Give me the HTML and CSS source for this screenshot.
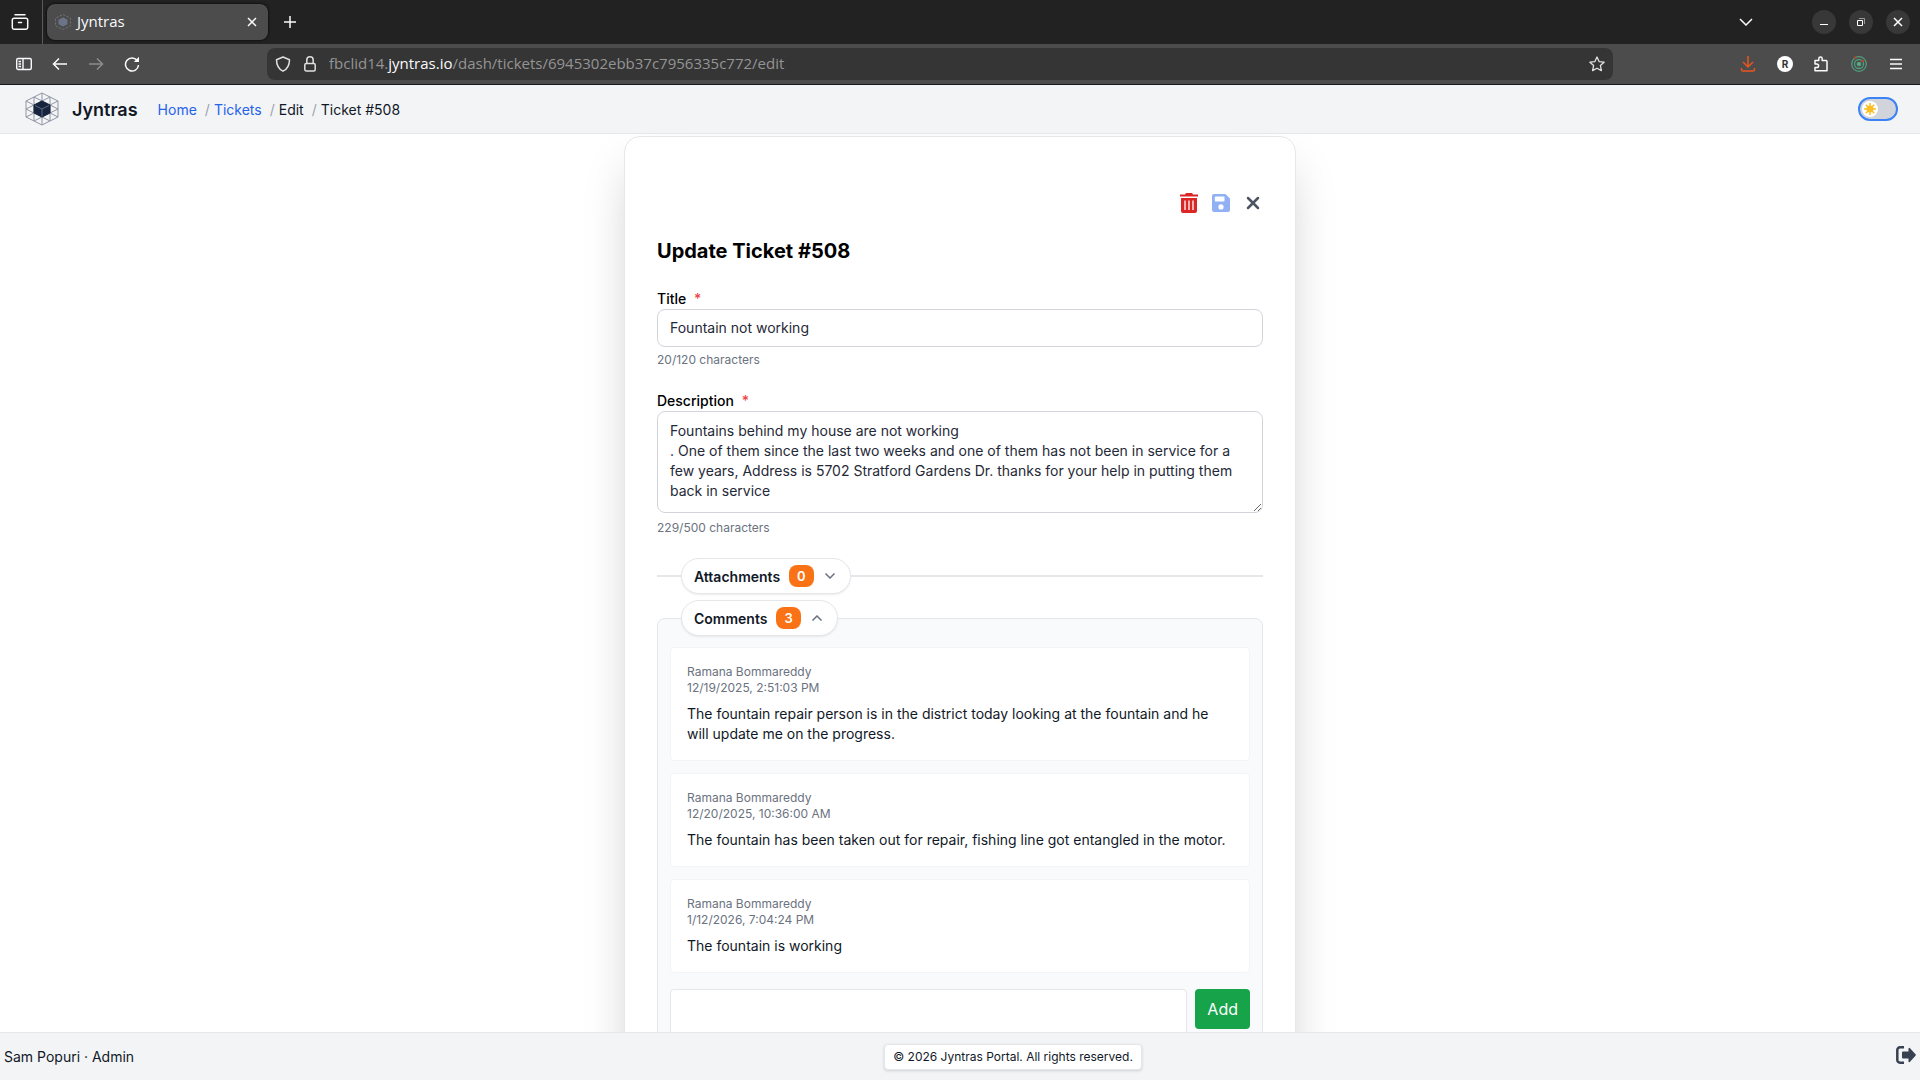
FILE: index.html
```html
<!DOCTYPE html>
<html lang="en">

<head>
    <meta charset="UTF-8">
    <meta name="viewport" content="width=device-width, initial-scale=1.0">
    <title>Jyntras</title>
    <link rel="stylesheet" href="styles.css">
</head>

<body>
    <!-- Browser tabs -->
    <div class="tab-bar">
        <button class="tab-overview" aria-label="Recent browsing">
            <svg width="18" height="18" viewBox="0 0 18 18" fill="none" stroke="#fbfbfe" stroke-width="1.5" stroke-linecap="round">
                <path d="M4 1.7h10M3 5.3h12a1.7 1.7 0 0 1 1.7 1.7v7.5a1.7 1.7 0 0 1-1.7 1.7H3a1.7 1.7 0 0 1-1.7-1.7V7A1.7 1.7 0 0 1 3 5.3zM7.5 9.5h3" />
            </svg>
        </button>
        <div class="tab">
            <svg width="16" height="16" viewBox="0 0 34 34" fill="none" stroke="#7d8290" stroke-width="1.5">
                <path d="M17 1l16 8v16l-16 8-16-8V9z" stroke-dasharray="5 3" />
                <path d="M17 9l8 4v8l-8 4-8-4v-8z" fill="#6b7488" stroke="#6b7488" stroke-width="3" />
            </svg>
            <span class="tab-title">Jyntras</span>
            <button class="tab-close" aria-label="Close tab">
                <svg width="10" height="10" viewBox="0 0 10 10" stroke="#fbfbfe" stroke-width="1.5">
                    <path d="M1 1l8 8M9 1l-8 8" />
                </svg>
            </button>
        </div>
        <button class="new-tab" aria-label="New tab">
            <svg width="12" height="12" viewBox="0 0 12 12" stroke="#fbfbfe" stroke-width="1.5">
                <path d="M6 0v12M0 6h12" />
            </svg>
        </button>
        <div class="window-buttons">
            <button class="list-tabs" aria-label="List all tabs">
                <svg width="14" height="8" viewBox="0 0 14 8" fill="none" stroke="#fbfbfe" stroke-width="1.5">
                    <path d="M1 1l6 6 6-6" />
                </svg>
            </button>
            <button class="window-button" aria-label="Minimize">
                <svg width="10" height="10" viewBox="0 0 10 10"><path d="M1 7h8v1H1z" fill="#fff" /></svg>
            </button>
            <button class="window-button" aria-label="Restore">
                <svg width="10" height="10" viewBox="0 0 10 10" fill="none">
                    <path d="M1.5 3.5h5v5h-5z" stroke="#fff" />
                    <path d="M3 1.5h5.5V7" stroke="#999" />
                </svg>
            </button>
            <button class="window-button" aria-label="Close">
                <svg width="10" height="10" viewBox="0 0 10 10" stroke="#fff" stroke-width="1.5"><path d="M1 1l8 8M9 1l-8 8" /></svg>
            </button>
        </div>
    </div>

    <!-- Address bar -->
    <div class="toolbar">
        <div class="toolbar-left">
            <button aria-label="Sidebar">
                <svg width="16" height="16" viewBox="0 0 16 16" fill="none" stroke="#fbfbfe" stroke-width="1.4">
                    <rect x=".7" y="2.5" width="14.6" height="11" rx="1.5" />
                    <path d="M7 2.5v11M2.5 5.5H5M2.5 8H5M2.5 10.5H5" />
                </svg>
            </button>
            <button aria-label="Back">
                <svg width="16" height="16" viewBox="0 0 16 16" fill="none" stroke="#fbfbfe" stroke-width="1.5">
                    <path d="M15 8H2M7 2.5L1.5 8 7 13.5" />
                </svg>
            </button>
            <button aria-label="Forward" disabled>
                <svg width="16" height="16" viewBox="0 0 16 16" fill="none" stroke="#8c8c8e" stroke-width="1.5">
                    <path d="M1 8h13M9 2.5L14.5 8 9 13.5" />
                </svg>
            </button>
            <button aria-label="Reload">
                <svg width="16" height="16" viewBox="0 0 16 16" fill="none" stroke="#fbfbfe" stroke-width="1.5">
                    <path d="M13.5 5A6.5 6.5 0 1 0 14.5 9" />
                    <path d="M15 .8V6H9.8z" fill="#fbfbfe" stroke="none" />
                </svg>
            </button>
        </div>
        <div class="url-bar">
            <svg width="16" height="16" viewBox="0 0 16 16" fill="none" stroke="#e0e0e2" stroke-width="1.5">
                <path d="M8 1l6.5 2.7c0 4.8-1.6 9-6.5 11.5C3.1 12.7 1.5 8.5 1.5 3.7z" stroke-linejoin="round" />
            </svg>
            <svg width="14" height="16" viewBox="1 0 14 16" fill="none" stroke="#e0e0e2" stroke-width="1.5">
                <rect x="2.8" y="7.5" width="10.4" height="7.5" rx="1.5" />
                <path d="M4.8 7.5V4a3.2 3.2 0 0 1 6.4 0v3.5" />
            </svg>
            <span class="url">fbclid14.<b>jyntras.io</b>/dash/tickets/6945302ebb37c7956335c772/edit</span>
            <button aria-label="Bookmark this page">
                <svg width="16" height="16" viewBox="0 0 16 16" fill="none" stroke="#e0e0e2" stroke-width="1.3" stroke-linejoin="round">
                    <path d="M8 1l2.1 4.6 5 .6-3.7 3.4 1 5L8 12.2l-4.4 2.4 1-5L.9 6.2l5-.6z" />
                </svg>
            </button>
        </div>
        <div class="toolbar-right">
            <button aria-label="Downloads">
                <svg width="16" height="16" viewBox="0 0 16 16" fill="none" stroke="#e95420" stroke-width="1.5">
                    <path d="M8 0v10.5M3 6l5 5 5-5M1.5 12v1.5A1.5 1.5 0 0 0 3 15h10a1.5 1.5 0 0 0 1.5-1.5V12" />
                </svg>
            </button>
            <button class="profile" aria-label="Profile">R</button>
            <button aria-label="Extensions">
                <svg width="16" height="16" viewBox="1 0 16 16" fill="none" stroke="#fbfbfe" stroke-width="1.5" stroke-linejoin="round">
                    <path d="M2 14.8V11.5h1.8a1.7 1.7 0 0 0 0-3.6H2V4.5h3.8V2.7a1.7 1.7 0 0 1 3.4 0v1.8H13a1 1 0 0 1 1 1v9.3z" />
                </svg>
            </button>
            <button aria-label="Tracker">
                <svg width="16" height="16" viewBox="0 0 16 16" fill="none" stroke="#4f9c7e" stroke-width="1.3">
                    <circle cx="8" cy="8" r="7.3" />
                    <circle cx="8" cy="8" r="4.5" />
                    <circle cx="8" cy="8" r="1.7" fill="#6bb08f" />
                    <path d="M3 1.5h2.5M10.5 5H13" stroke="#b5482a" stroke-width="2" />
                </svg>
            </button>
            <button aria-label="Application menu">
                <svg width="16" height="16" viewBox="0 0 16 16" stroke="#fbfbfe" stroke-width="1.3">
                    <path d="M2 3.5h12M2 8h12M2 12.5h12" />
                </svg>
            </button>
        </div>
    </div>

    <!-- Page header -->
    <header class="header">
        <svg class="logo" width="34" height="34" viewBox="0 0 34 34" fill="none" stroke="#8f95a3">
            <path d="M17 1l16 8v16l-16 8-16-8V9z" />
            <path d="M9 5v24M17 1v32M25 5v24M1 9l32 16M9 5l24 12M1 17l24 12M33 9L1 25M25 5L1 17M33 17L9 29" />
            <path d="M17 9l8 4v8l-8 4-8-4v-8z" fill="#16243d" stroke="#16243d" />
            <path d="M10 13.5l7 3.5 7-3.5M17 17v7.5" stroke="#5b6984" />
        </svg>
        <span class="brand">Jyntras</span>
        <nav class="breadcrumb" aria-label="Breadcrumb">
            <a href="#">Home</a>
            <span class="separator">/</span>
            <a href="#">Tickets</a>
            <span class="separator">/</span>
            <span>Edit</span>
            <span class="separator">/</span>
            <span>Ticket #508</span>
        </nav>
        <label class="theme-toggle">
            <input type="checkbox" aria-label="Dark mode">
            <span class="knob">
                <svg width="12" height="12" viewBox="0 0 12 12" stroke="#fbbf24" stroke-width="1.5">
                    <circle cx="6" cy="6" r="2.8" fill="#fbbf24" />
                    <path d="M6 0v12M0 6h12M1.8 1.8l8.4 8.4M10.2 1.8l-8.4 8.4" />
                </svg>
            </span>
        </label>
    </header>

    <!-- Ticket form -->
    <main class="content">
        <form class="card">
            <div class="actions">
                <button type="button" aria-label="Delete">
                    <svg width="18" height="20" viewBox="0 0 18 20">
                        <path d="M6 0h6l1 1.5h5v2H0v-2h5zM1 5h16v13a2 2 0 0 1-2 2H3a2 2 0 0 1-2-2z" fill="#dc2626" />
                        <path d="M5 7.5V17M9 7.5V17M13 7.5V17" stroke="#fff" stroke-width="1.3" />
                    </svg>
                </button>
                <button type="submit" aria-label="Save" disabled>
                    <svg width="18" height="18" viewBox="0 0 18 18">
                        <path fill="#92b1f5" fill-rule="evenodd" d="M2 0h11.5L18 4.5V16a2 2 0 0 1-2 2H2a2 2 0 0 1-2-2V2a2 2 0 0 1 2-2zM3.8 2.5a1 1 0 0 0-1 1v3a1 1 0 0 0 1 1h7.7a1 1 0 0 0 1-1v-3a1 1 0 0 0-1-1zM9 10.3a2.6 2.6 0 1 0 0 5.2 2.6 2.6 0 0 0 0-5.2z" />
                    </svg>
                </button>
                <button type="button" aria-label="Cancel">
                    <svg width="14" height="14" viewBox="0 0 14 14" stroke="#4b5563" stroke-width="2.5" stroke-linecap="round">
                        <path d="M2 2l10 10M12 2L2 12" />
                    </svg>
                </button>
            </div>
            <h1>Update Ticket #508</h1>
            <div class="form-group">
                <label for="title">Title <span class="required">*</span></label>
                <input type="text" id="title" name="title" value="Fountain not working" required>
                <p class="counter">20/120 characters</p>
            </div>
            <div class="form-group">
                <label for="description">Description <span class="required">*</span></label>
                <textarea id="description" name="description" rows="4" required>Fountains behind my house are not working
. One of them since the last two weeks and one of them has not been in service for a few years, Address is 5702 Stratford Gardens Dr. thanks for your help in putting them back in service</textarea>
                <p class="counter">229/500 characters</p>
            </div>

            <div class="section-toggle">
                <button type="button" class="pill" aria-expanded="false">
                    Attachments <span class="badge">0</span>
                    <svg width="14" height="6" viewBox="-2 0 14 6" fill="none" stroke="#6b7280" stroke-width="1.5">
                        <path d="M.5.5L5 5 9.5.5" />
                    </svg>
                </button>
            </div>

            <section class="comments">
                <button type="button" class="pill" aria-expanded="true">
                    Comments <span class="badge">3</span>
                    <svg width="14" height="6" viewBox="-2 0 14 6" fill="none" stroke="#6b7280" stroke-width="1.5">
                        <path d="M.5 5.5L5 1l4.5 4.5" />
                    </svg>
                </button>
                <div class="comment">
                    <p class="meta">Ramana Bommareddy<br>12/19/2025, 2:51:03 PM</p>
                    <p>The fountain repair person is in the district today looking at the fountain and he will update me on the progress.</p>
                </div>
                <div class="comment">
                    <p class="meta">Ramana Bommareddy<br>12/20/2025, 10:36:00 AM</p>
                    <p>The fountain has been taken out for repair, fishing line got entangled in the motor.</p>
                </div>
                <div class="comment">
                    <p class="meta">Ramana Bommareddy<br>1/12/2026, 7:04:24 PM</p>
                    <p>The fountain is working</p>
                </div>
                <div class="add-comment">
                    <textarea name="comment" aria-label="New comment"></textarea>
                    <button type="button" class="add-button">Add</button>
                </div>
            </section>
        </form>
    </main>

    <footer class="footer">
        <span class="user">Sam Popuri · Admin</span>
        <span class="copyright">© 2026 Jyntras Portal. All rights reserved.</span>
        <button class="sign-out" aria-label="Sign out">
            <svg width="20" height="18" viewBox="0 0 20 18">
                <path d="M8 1.3H4A2.7 2.7 0 0 0 1.3 4v10A2.7 2.7 0 0 0 4 16.7h4" fill="none" stroke="#374151" stroke-width="2.5" />
                <path d="M7 5.5h5.5V2.6a.8.8 0 0 1 1.3-.6l5.7 6.3a1 1 0 0 1 0 1.4L13.8 16a.8.8 0 0 1-1.3-.6v-2.9H7a1 1 0 0 1-1-1v-5a1 1 0 0 1 1-1z" fill="#374151" />
            </svg>
        </button>
    </footer>
</body>

</html>
```
FILE: styles.css
```css
/* styles.css */
* {
    box-sizing: border-box;
    margin: 0;
    padding: 0;
}

body {
    display: flex;
    flex-direction: column;
    height: 100vh;
    overflow: hidden;
    font-family: Inter, sans-serif;
    font-size: 14px;
    line-height: 20px;
    color: #111827;
    background-color: #fff;
}

button {
    display: flex;
    align-items: center;
    justify-content: center;
    border: none;
    background: none;
    font-family: inherit;
    cursor: pointer;
}

/* browser window */
.tab-bar {
    display: flex;
    flex: none;
    align-items: center;
    height: 44px;
    background-color: #222;
}

.tab-overview {
    width: 43px;
    height: 44px;
    padding-right: 3px;
    border-right: 1px solid #5a5a5a;
}

.tab {
    display: flex;
    align-items: center;
    gap: 6px;
    width: 221px;
    height: 36px;
    margin-left: 4px;
    padding: 0 8px;
    border-radius: 8px;
    background-color: #4c4c4c;
    box-shadow: 0 0 3px #000;
}

.tab-title {
    flex: 1;
    padding-bottom: 2px;
    font-family: "Open Sans", sans-serif;
    font-size: 15px;
    color: #fbfbfe;
}

.tab-close {
    width: 16px;
    height: 16px;
}

.new-tab {
    width: 44px;
    height: 44px;
}

.window-buttons {
    display: flex;
    align-items: center;
    gap: 13px;
    margin-left: auto;
    margin-right: 10px;
}

.list-tabs {
    margin-right: 46px;
}

.window-button {
    width: 24px;
    height: 24px;
    border-radius: 12px;
    background-color: #383838;
}

.toolbar {
    display: flex;
    flex: none;
    align-items: center;
    height: 41px;
    border-bottom: 1px solid #181818;
    background-color: #4c4c4c;
}

.toolbar-left {
    display: flex;
    gap: 20px;
    width: 267px;
    padding-left: 16px;
}

.url-bar {
    display: flex;
    flex: 1;
    align-items: center;
    gap: 12px;
    height: 32px;
    padding: 0 8px;
    border-radius: 8px;
    background-color: #353535;
}

.url {
    flex: 1;
    padding-bottom: 2px;
    font-family: "Open Sans", sans-serif;
    font-size: 15px;
    color: #949494;
}

.url b {
    font-weight: normal;
    color: #fbfbfe;
}

.toolbar-right {
    display: flex;
    justify-content: flex-end;
    gap: 21px;
    width: 307px;
    padding-right: 16px;
}

.profile {
    width: 16px;
    height: 16px;
    border-radius: 8px;
    background-color: #fff;
    color: #333;
    font-size: 10px;
    font-weight: bold;
}

/* page header */
.header {
    display: flex;
    flex: none;
    align-items: center;
    height: 49px;
    padding: 0 22px 0 25px;
    border-bottom: 1px solid #e5e7eb;
    background-color: #f3f4f6;
}

.brand,
.breadcrumb {
    padding-top: 2px;
}

.brand {
    margin-left: 13px;
    font-size: 18px;
    font-weight: 600;
}

.breadcrumb {
    display: flex;
    gap: 4px;
    margin-left: 20px;
}

.breadcrumb a {
    color: #2563eb;
    text-decoration: none;
}

.separator {
    padding-left: 4px;
    color: #9ca3af;
}

.theme-toggle {
    display: flex;
    align-items: center;
    width: 40px;
    height: 24px;
    margin-left: auto;
    padding: 2px;
    border: 2px solid #3b82f6;
    border-radius: 12px;
    background-color: #d1d5db;
    cursor: pointer;
}

.theme-toggle input {
    appearance: none;
}

.knob {
    display: flex;
    align-items: center;
    justify-content: center;
    width: 16px;
    height: 16px;
    border-radius: 8px;
    background-color: #fff;
}

/* ticket form */
.content {
    flex: 1;
    min-height: 0;
    padding: 2px 16px;
    overflow-y: auto;
    scrollbar-width: none;
}

.card {
    max-width: 672px;
    margin: 0 auto;
    padding: 56px 32px 32px 32px;
    border: 1px solid #e5e7eb;
    border-radius: 16px;
    background-color: #fff;
    box-shadow: 0 25px 50px -12px rgba(0, 0, 0, 0.25);
}

.actions {
    display: flex;
    justify-content: flex-end;
    align-items: center;
    gap: 14px;
    height: 20px;
    padding-right: 1px;
}

.actions button {
    width: 18px;
    height: 20px;
}

.card h1 {
    margin: 24px 0 23px 0;
    font-size: 20px;
    line-height: 28px;
    color: #000;
}

.form-group {
    margin-bottom: 20px;
}

.form-group label {
    display: block;
    padding-top: 1px;
    font-weight: 500;
    color: #000;
}

.required {
    margin-left: 4px;
    color: #ef4444;
}

.form-group input,
.form-group textarea {
    display: block;
    width: 100%;
    padding: 8px 12px;
    border: 1px solid #d1d5db;
    border-radius: 8px;
    font-family: inherit;
    font-size: 14px;
    line-height: 20px;
    color: #1f2937;
}

.form-group textarea {
    height: 102px;
    margin-bottom: 5px;
    padding: 9px 12px;
}

.counter {
    margin-top: 3px;
    font-size: 12px;
    color: #6b7280;
}

.section-toggle {
    display: flex;
    align-items: center;
    height: 36px;
}

.section-toggle::before {
    content: "";
    width: 24px;
    height: 2px;
    background-color: #e5e7eb;
}

.section-toggle::after {
    content: "";
    flex: 1;
    height: 2px;
    background-color: #e5e7eb;
}

.pill {
    gap: 9px;
    height: 36px;
    padding: 0 13px 0 12px;
    border: 1px solid #e5e7eb;
    border-radius: 18px;
    background-color: #fff;
    box-shadow: 0 1px 2px rgba(0, 0, 0, 0.08);
    font-size: 14px;
    font-weight: 600;
    color: #111827;
}

.badge {
    padding: 1px 8px;
    border-radius: 8px;
    background-color: #f97316;
    color: #fff;
    font-size: 13px;
    line-height: 20px;
}

.comments {
    margin-top: 24px;
    padding: 0 12px 12px 12px;
    border: 1px solid #e5e7eb;
    border-radius: 8px;
    background-color: #f9fafb;
}

/* pill sits on the top border of the panel */
.comments .pill {
    margin: -19px 0 11px 11px;
}

.comment {
    margin-bottom: 12px;
    padding: 16px;
    border: 1px solid #f3f4f6;
    border-radius: 4px;
    background-color: #fff;
}

.comment .meta {
    margin-bottom: 8px;
    font-size: 12px;
    line-height: 16px;
    color: #6b7280;
}

.add-comment {
    display: flex;
    align-items: flex-start;
    gap: 8px;
    margin-top: 16px;
}

.add-comment textarea {
    flex: 1;
    height: 64px;
    padding: 8px;
    border: 1px solid #e5e7eb;
    border-radius: 4px;
    font-family: inherit;
}

.add-button {
    height: 40px;
    padding: 0 12px;
    border-radius: 4px;
    background-color: #16a34a;
    color: #fff;
    font-size: 16px;
}

/* footer */
.footer {
    display: flex;
    flex: none;
    align-items: center;
    justify-content: space-between;
    height: 48px;
    padding: 0 4px;
    border-top: 1px solid #e5e7eb;
    background-color: #f3f4f6;
}

.copyright {
    padding: 2px 8px;
    border: 1px solid #e5e7eb;
    border-radius: 4px;
    background-color: #fff;
    box-shadow: 0 1px 3px rgba(0, 0, 0, 0.15);
    font-size: 12px;
}

.sign-out {
    justify-content: flex-end;
    width: 24px;
    padding-bottom: 3px;
}
```
